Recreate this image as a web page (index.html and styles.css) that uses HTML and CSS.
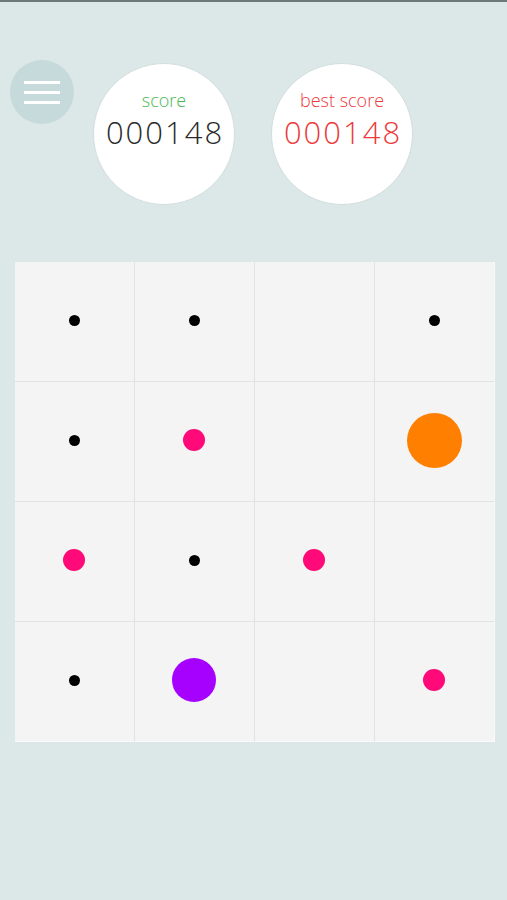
FILE: index.html
```html
<!DOCTYPE html>
<html lang="en">
<head>
    <meta charset="UTF-8">
    <meta name="viewport" content="width=device-width, initial-scale=1.0">
    <title>Dots</title>
    <link rel="stylesheet" href="styles.css">
</head>
<body>
    <div class="header">
        <button class="menu-button">
            <span></span>
            <span></span>
            <span></span>
        </button>
        <div class="score-circle">
            <div class="score-label">score</div>
            <div class="score-value">000148</div>
        </div>
        <div class="score-circle best">
            <div class="score-label">best score</div>
            <div class="score-value">000148</div>
        </div>
    </div>

    <div class="board">
        <div class="cell"><div class="dot tiny"></div></div>
        <div class="cell"><div class="dot tiny"></div></div>
        <div class="cell"></div>
        <div class="cell"><div class="dot tiny"></div></div>

        <div class="cell"><div class="dot tiny"></div></div>
        <div class="cell"><div class="dot pink"></div></div>
        <div class="cell"></div>
        <div class="cell"><div class="dot orange"></div></div>

        <div class="cell"><div class="dot pink"></div></div>
        <div class="cell"><div class="dot tiny"></div></div>
        <div class="cell"><div class="dot pink"></div></div>
        <div class="cell"></div>

        <div class="cell"><div class="dot tiny"></div></div>
        <div class="cell"><div class="dot purple"></div></div>
        <div class="cell"></div>
        <div class="cell"><div class="dot pink"></div></div>
    </div>
</body>
</html>
```

FILE: styles.css
```css
body {
    margin: 0;
    min-height: 898px;
    background-color: #dce8e7;
    border-top: 2px solid #6b7878;
    font-family: "Open Sans", sans-serif;
}

.header {
    display: flex;
    align-items: flex-start;
    padding: 58px 0 0 10px;
}

.menu-button {
    width: 64px;
    height: 64px;
    border: none;
    border-radius: 50%;
    background-color: #c6dadb;
    display: flex;
    flex-direction: column;
    align-items: center;
    justify-content: center;
    gap: 7px;
    padding: 0;
    margin-right: 19px;
}

.menu-button span {
    display: block;
    width: 36px;
    height: 3px;
    background-color: #ffffff;
}

.score-circle {
    width: 140px;
    height: 140px;
    margin-top: 3px;
    border: 1px solid #d2dedd;
    border-radius: 50%;
    background-color: #ffffff;
    display: flex;
    flex-direction: column;
    align-items: center;
    padding-top: 24px;
    box-sizing: content-box;
    height: 116px;
}

.score-circle.best {
    margin-left: 36px;
}

.score-label {
    font-size: 18px;
    font-weight: 300;
    line-height: 24px;
    color: #48b950;
}

.score-value {
    font-size: 31px;
    font-weight: 300;
    line-height: 40px;
    letter-spacing: 2px;
    margin-right: -2px;
    color: #2a2a2a;
}

.best .score-label,
.best .score-value {
    color: #ec3a3c;
}

.board {
    display: grid;
    grid-template-columns: repeat(4, 120px);
    grid-template-rows: repeat(4, 120px);
    width: 480px;
    margin: 57px 0 0 15px;
    background-color: #f4f4f4;
}

.cell {
    display: flex;
    align-items: center;
    justify-content: center;
    box-sizing: border-box;
    border-right: 1px solid #e2e2e2;
    border-bottom: 1px solid #e2e2e2;
}

.cell:nth-child(4n) {
    border-right: 1px solid #fafafa;
}

.cell:nth-child(n+13) {
    border-bottom: 1px solid #fafafa;
}

.dot {
    border-radius: 50%;
    margin: -3px 0 0 -1px;
}

.dot.tiny {
    width: 11px;
    height: 11px;
    background-color: #000000;
}

.dot.pink {
    width: 22px;
    height: 22px;
    background-color: #ff0a78;
}

.dot.orange {
    width: 55px;
    height: 55px;
    background-color: #ff7f00;
}

.dot.purple {
    width: 44px;
    height: 44px;
    background-color: #a600ff;
}
```
